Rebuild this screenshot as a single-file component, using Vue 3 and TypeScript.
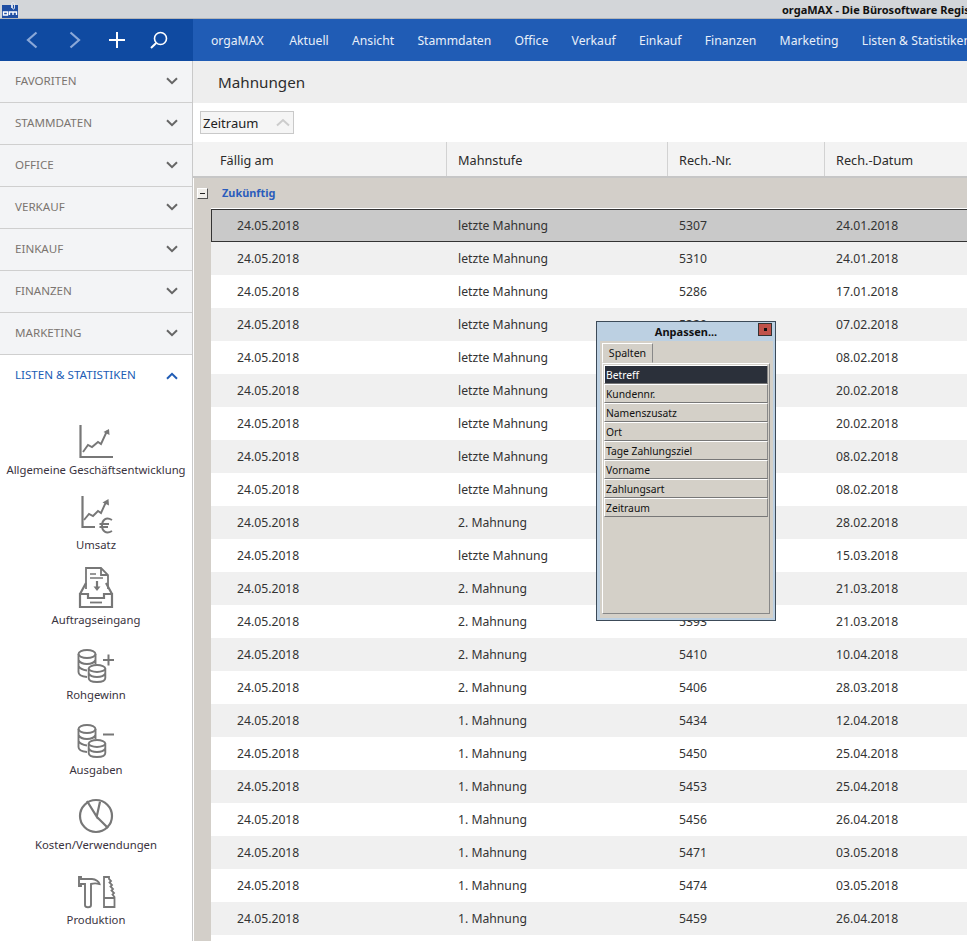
<script setup lang="ts">
const menu = ['orgaMAX', 'Aktuell', 'Ansicht', 'Stammdaten', 'Office', 'Verkauf', 'Einkauf', 'Finanzen', 'Marketing', 'Listen & Statistiken']
const sections = ['Favoriten', 'Stammdaten', 'Office', 'Verkauf', 'Einkauf', 'Finanzen', 'Marketing']
const tools = [
  { label: 'Allgemeine Geschäftsentwicklung', icon: 'chart' },
  { label: 'Umsatz', icon: 'euro' },
  { label: 'Auftragseingang', icon: 'inbox' },
  { label: 'Rohgewinn', icon: 'plus' },
  { label: 'Ausgaben', icon: 'minus' },
  { label: 'Kosten/Verwendungen', icon: 'pie' },
  { label: 'Produktion', icon: 'tools' },
]
const columns = ['Fällig am', 'Mahnstufe', 'Rech.-Nr.', 'Rech.-Datum']
const last = 'letzte Mahnung'
const second = '2. Mahnung'
const first = '1. Mahnung'
const rows = [
  [last, '5307', '24.01.2018'],
  [last, '5310', '24.01.2018'],
  [last, '5286', '17.01.2018'],
  [last, '5320', '07.02.2018'],
  [last, '5324', '08.02.2018'],
  [last, '5337', '20.02.2018'],
  [last, '5338', '20.02.2018'],
  [last, '5325', '08.02.2018'],
  [last, '5326', '08.02.2018'],
  [second, '5346', '28.02.2018'],
  [last, '5372', '15.03.2018'],
  [second, '5392', '21.03.2018'],
  [second, '5393', '21.03.2018'],
  [second, '5410', '10.04.2018'],
  [second, '5406', '28.03.2018'],
  [first, '5434', '12.04.2018'],
  [first, '5450', '25.04.2018'],
  [first, '5453', '25.04.2018'],
  [first, '5456', '26.04.2018'],
  [first, '5471', '03.05.2018'],
  [first, '5474', '03.05.2018'],
  [first, '5459', '26.04.2018'],
]
const fields = ['Betreff', 'Kundennr.', 'Namenszusatz', 'Ort', 'Tage Zahlungsziel', 'Vorname', 'Zahlungsart', 'Zeitraum']
</script>

<template>
  <div class="app">
    <div class="titlebar">
      <svg class="logo" width="16" height="17" viewBox="0 0 16 17">
        <rect x="0" y="4" width="16" height="13" fill="#1f4fa3" />
        <path d="M9.5 7 V3 C9.5 1 12.5 1 12.5 3 V7 C12.5 8.5 10.5 8.5 10.5 7 V4" stroke="#e6ecf5" stroke-width="0.9" fill="none" />
        <path d="M1.5 11 H5.5 V14 H1.5 Z M7.5 14 V11 H14.5 V14 M11 11 V14" stroke="#fff" stroke-width="1.4" fill="none" />
      </svg>
      <span class="window-title">orgaMAX - Die Bürosoftware Registriert für Demo</span>
    </div>

    <div class="topbar">
      <div class="nav-tools">
        <svg width="18" height="20" viewBox="0 0 18 20"><path d="M13.5 2.5 L5 10 L13.5 17.5" class="nav-dim" /></svg>
        <svg width="18" height="20" viewBox="0 0 18 20"><path d="M4.5 2.5 L13 10 L4.5 17.5" class="nav-dim" /></svg>
        <svg width="16" height="18" viewBox="0 0 16 18"><path d="M8 1 V17 M0 9 H16" class="nav-line" /></svg>
        <svg width="18" height="18" viewBox="0 0 18 18"><circle cx="10.5" cy="7.5" r="6" class="nav-thin" /><path d="M6.2 12 L1 17" class="nav-line" /></svg>
      </div>
      <nav class="menu">
        <span v-for="item in menu" :key="item">{{ item }}</span>
      </nav>
    </div>

    <div class="content">
      <aside class="sidebar">
        <div v-for="section in sections" :key="section" class="section">
          <span>{{ section }}</span>
          <svg width="12" height="8" viewBox="0 0 12 8"><path d="M1 1.2 L6 6.2 L11 1.2" /></svg>
        </div>
        <div class="section open">
          <span>Listen &amp; Statistiken</span>
          <svg width="12" height="8" viewBox="0 0 12 8"><path d="M1 6.8 L6 1.8 L11 6.8" /></svg>
        </div>

        <div class="tools">
          <div v-for="tool in tools" :key="tool.label" class="tool">
            <svg class="tool-icon" width="40" height="40" viewBox="0 0 40 40">
              <template v-if="tool.icon === 'chart'">
                <path d="M4.5 4 V36 H37" />
                <path d="M7 31 L12 24 L16 26 L22 21 L25 23 L31 10" stroke-width="1.9" />
                <path d="M27.5 11 L33 8 L33.5 14 Z" class="solid" />
              </template>
              <template v-else-if="tool.icon === 'euro'">
                <path d="M6.5 0 V31 H19" />
                <path d="M8 24 L13 18 L17 20 L22 15 L25 17 L30 6" stroke-width="1.9" />
                <path d="M26.5 6.5 L32.5 3 L33 9.5 Z" class="solid" />
                <path d="M36 24 C30 20.5 26 24 26 29.5 C26 35 30 38.5 36 35 M23.5 28 H33 M23.5 31 H32" stroke-width="1.9" />
              </template>
              <template v-else-if="tool.icon === 'inbox'">
                <path d="M10 18 V-3 H25 L32 4 V18 M25 -3 V4 H32" stroke-width="1.8" />
                <path d="M14 3 H20 M14 7 H27" stroke-width="1.5" />
                <path d="M21 10 V17" />
                <path d="M17.5 15.5 H24.5 L21 20 Z" class="solid" />
                <path d="M4 23 V36 H36 V23 H28 V27 H12 V23 Z M10 12 L4 23 M30 12 L36 23" />
                <path d="M14 31.5 H26" stroke-width="1.8" />
              </template>
              <template v-else-if="tool.icon === 'plus' || tool.icon === 'minus'">
                <g stroke-width="1.9">
                  <ellipse cx="11" cy="8" rx="8.5" ry="4" />
                  <path d="M2.5 8 V26 C2.5 29 6 30.5 11 31 M19.5 8 V18 M2.5 14 C4 17 8 18 11 18 C14 18 18 17 19.5 14 M2.5 20 C4 23 7 24 11 24.5" />
                  <ellipse cx="21" cy="22.5" rx="8.3" ry="3.5" />
                  <path d="M12.7 22.5 V32 C12.7 35 17 36 21 36 C25 36 29.3 35 29.3 32 V22.5 M12.7 27.5 C14 30 18 31 21 31 C24 31 28 30 29.3 27.5" />
                </g>
                <path v-if="tool.icon === 'plus'" d="M32.5 8.5 V19.5 M27 14 H38" stroke-width="2" />
                <path v-else d="M27 13.5 H38" stroke-width="2" />
              </template>
              <template v-else-if="tool.icon === 'pie'">
                <circle cx="20" cy="20" r="16" />
                <path d="M11 5 L20.7 20.7 L24 5.7 M20.7 20.7 L32 32" />
              </template>
              <template v-else>
                <path d="M3 6 H5 V8 H16 C20 8 23 11 23.5 13 C20 12 18 12 15 13 V34 C15 37 9 37 9 34 V13 H5 V15 H3 Z" stroke-width="1.9" />
                <path d="M28 6 H33 V8 L35 10 L33.5 11.5 L36 14 L34.5 15.5 L37 18 L35.5 19.5 L38 22 L36.5 23.5 L38.5 26 V36 H28 Z M28 27 H38.5" stroke-width="1.8" />
              </template>
            </svg>
            <span>{{ tool.label }}</span>
          </div>
        </div>
      </aside>

      <main class="main">
        <h1 class="page-title">Mahnungen</h1>
        <div class="filter">
          <div class="group-chip">
            <span>Zeitraum</span>
            <svg width="16" height="9" viewBox="0 0 16 9"><path d="M2 7.5 L8 2 L14 7.5" /></svg>
          </div>
        </div>
        <div class="table-head">
          <div v-for="col in columns" :key="col" class="head-cell">{{ col }}</div>
        </div>
        <div class="group-row">
          <span class="expander"></span>
          <span class="group-label">Zukünftig</span>
        </div>
        <div class="rows">
          <div v-for="(row, i) in rows" :key="i" class="row" :class="{ selected: i === 0, shaded: i % 2 === 1 }">
            <span class="cell">24.05.2018</span>
            <span class="cell">{{ row[0] }}</span>
            <span class="cell">{{ row[1] }}</span>
            <span class="cell">{{ row[2] }}</span>
          </div>
          <div class="row"></div>
        </div>
      </main>
    </div>

    <div class="customize">
      <div class="customize-title">
        <span>Anpassen...</span>
        <button class="close"></button>
      </div>
      <div class="customize-body">
        <div class="tab">Spalten</div>
        <div class="panel">
          <div v-for="(field, i) in fields" :key="field" class="field" :class="{ active: i === 0 }">{{ field }}</div>
        </div>
      </div>
    </div>
  </div>
</template>

<style>
html, body {
  margin: 0;
  overflow: hidden;
}
</style>

<style scoped>
.app {
  position: relative;
  width: 967px;
  height: 941px;
  overflow: hidden;
  display: flex;
  flex-direction: column;
  font-family: "Noto Sans", sans-serif;
  font-size: 12.2px;
  color: #333;
  background: #fff;
}

.titlebar {
  flex: 0 0 19px;
  box-sizing: border-box;
  display: flex;
  align-items: center;
  background: #d3d6d9;
  border-bottom: 1px solid #b4b6b8;
  padding-left: 2px;
  overflow: hidden;
  white-space: nowrap;
}

.logo {
  flex: none;
}

.window-title {
  margin-left: 764px;
  font-size: 11px;
  font-weight: 700;
  color: #111;
}

.topbar {
  flex: 0 0 42px;
  display: flex;
  background: #205cb5;
  color: #fff;
}

.nav-tools {
  flex: 0 0 193px;
  box-sizing: border-box;
  display: flex;
  align-items: center;
  gap: 25px;
  padding-left: 23px;
  background: #0f4aa1;
}

.nav-dim {
  stroke: #8aa8d8;
  stroke-width: 2.2;
  fill: none;
}

.nav-line {
  stroke: #fff;
  stroke-width: 2;
  fill: none;
}

.nav-thin {
  stroke: #fff;
  stroke-width: 1.6;
  fill: none;
}

.menu {
  display: flex;
  align-items: center;
  gap: 23.3px;
  padding-left: 18px;
  font-size: 12.2px;
  white-space: nowrap;
  color: #e8eff9;
}

.menu span:first-child {
  margin-right: 2.4px;
}

.content {
  flex: 1;
  display: flex;
  min-height: 0;
}

.sidebar {
  flex: 0 0 193px;
  box-sizing: border-box;
  background: #fff;
  border-right: 1px solid #c9c9c9;
  display: flex;
  flex-direction: column;
}

.section {
  flex: 0 0 42px;
  box-sizing: border-box;
  display: flex;
  align-items: center;
  justify-content: space-between;
  padding: 0 14px 3px 15px;
  background: #f3f4f6;
  border-bottom: 1px solid #cfcfcf;
  text-transform: uppercase;
  font-size: 11.6px;
  color: #7b7470;
}

.section svg {
  margin-top: 2px;
  fill: none;
  stroke: #666;
  stroke-width: 2;
}

.section.open {
  background: #fff;
  border-bottom: 0;
  color: #205cb5;
}

.section.open svg {
  stroke: #205cb5;
}

.tools {
  display: flex;
  flex-direction: column;
  padding-top: 24px;
}

.tool {
  flex: 0 0 75px;
  display: flex;
  flex-direction: column;
  align-items: center;
  color: #3a3340;
  font-size: 11.3px;
  white-space: nowrap;
}

.tool-icon {
  flex: none;
  margin-bottom: 1px;
  overflow: visible;
  fill: none;
  stroke: #777;
  stroke-width: 2.2;
}

.tool-icon .solid {
  fill: #777;
  stroke: none;
}

.main {
  flex: 1;
  min-width: 0;
  display: flex;
  flex-direction: column;
}

.page-title {
  flex: 0 0 42px;
  box-sizing: border-box;
  margin: 0;
  padding-left: 25px;
  display: flex;
  align-items: center;
  background: #eee;
  font-size: 15.2px;
  font-weight: 400;
  color: #2c2c2c;
}

.filter {
  flex: 0 0 39px;
  box-sizing: border-box;
  display: flex;
  align-items: center;
  padding: 0 0 0 7px;
  background: #fff;
}

.group-chip {
  box-sizing: border-box;
  width: 94px;
  height: 23px;
  display: flex;
  align-items: center;
  justify-content: space-between;
  padding: 0 2px 0 2px;
  background: #f5f5f5;
  border: 1px solid #c9c9c9;
  font-size: 13px;
  color: #222;
}

.group-chip svg {
  fill: none;
  stroke: #ccc;
  stroke-width: 2;
}

.table-head {
  flex: 0 0 36px;
  box-sizing: border-box;
  display: grid;
  grid-template-columns: 254px 221px 157px 1fr;
  background: #f3f3f3;
  border-bottom: 2px solid #c6c6c6;
}

.head-cell {
  display: flex;
  align-items: center;
  padding: 2px 0 0 11px;
  font-size: 12.7px;
  color: #2a2a2a;
  border-right: 1px solid #d2d2d2;
  white-space: nowrap;
}

.head-cell:first-child {
  padding-left: 27px;
}

.head-cell:last-child {
  border-right: 0;
}

.group-row {
  flex: 0 0 30px;
  display: flex;
  align-items: center;
  background: #d3cfc9;
  box-shadow: inset 1px 0 0 #fff;
}

.expander {
  position: relative;
  box-sizing: border-box;
  width: 11px;
  height: 11px;
  margin-left: 4px;
  background: #f0eeea;
  border: 1px solid;
  border-color: #fff #555 #555 #fff;
}

.expander::after {
  content: "";
  position: absolute;
  left: 2px;
  right: 2px;
  top: 4px;
  height: 1px;
  background: #222;
}

.group-label {
  margin: -2px 0 0 14px;
  font-size: 10.9px;
  font-weight: 700;
  color: #2a5cbc;
}

.rows {
  flex: 1;
  min-height: 0;
  overflow: hidden;
  padding: 1px 0 0 18px;
  background: #d3cfc9;
  box-shadow: inset 1px 0 0 #fff;
}

.row {
  box-sizing: border-box;
  height: 33px;
  display: grid;
  grid-template-columns: 236px 221px 157px 1fr;
  align-items: center;
  background: #fff;
  white-space: nowrap;
}

.row.shaded {
  background: #f0f0f0;
}

.row.selected {
  grid-template-columns: 235px 221px 157px 1fr;
  background: #c9c9c9;
  border: 1px solid #333;
  border-right: 0;
  box-shadow: 0 -1px 0 #fff;
}

.cell {
  padding-left: 11px;
}

.cell:first-child {
  padding-left: 26px;
}

.row.selected .cell:first-child {
  padding-left: 25px;
}

.customize {
  position: absolute;
  left: 596px;
  top: 321px;
  box-sizing: border-box;
  width: 180px;
  height: 300px;
  display: flex;
  flex-direction: column;
  background: #bcd0e2;
  border: 1px solid #3c4a58;
  color: #111;
}

.customize-title {
  position: relative;
  flex: 0 0 19px;
  display: flex;
  align-items: center;
  justify-content: center;
  font-size: 11px;
  font-weight: 700;
}

.close {
  position: absolute;
  top: 1px;
  right: 3px;
  width: 14px;
  height: 13px;
  padding: 0;
  background: #c0524a;
  border: 1px solid #333;
}

.close::after {
  content: "";
  display: block;
  width: 3px;
  height: 3px;
  margin: auto;
  background: #111;
}

.customize-body {
  flex: 1;
  min-height: 0;
  display: flex;
  flex-direction: column;
  margin: 0 2px 2px 3px;
  padding: 2px 3px 4px 2px;
  background: #d4d0c8;
}

.tab {
  align-self: flex-start;
  box-sizing: border-box;
  height: 20px;
  width: 51px;
  display: flex;
  align-items: center;
  justify-content: center;
  border: 1px solid;
  border-color: #fff #888 transparent #fff;
  font-size: 10.6px;
}

.panel {
  flex: 1;
  display: flex;
  flex-direction: column;
  padding: 1px;
  border: 1px solid;
  border-color: #fff #888 #888 #fff;
}

.field {
  box-sizing: border-box;
  flex: none;
  height: 19px;
  display: flex;
  align-items: center;
  padding-left: 1px;
  border: 1px solid;
  border-color: #fff #888 #777 #fff;
  font-size: 10.3px;
  white-space: nowrap;
}

.field.active {
  background: #2b303a;
  color: #fff;
}
</style>
